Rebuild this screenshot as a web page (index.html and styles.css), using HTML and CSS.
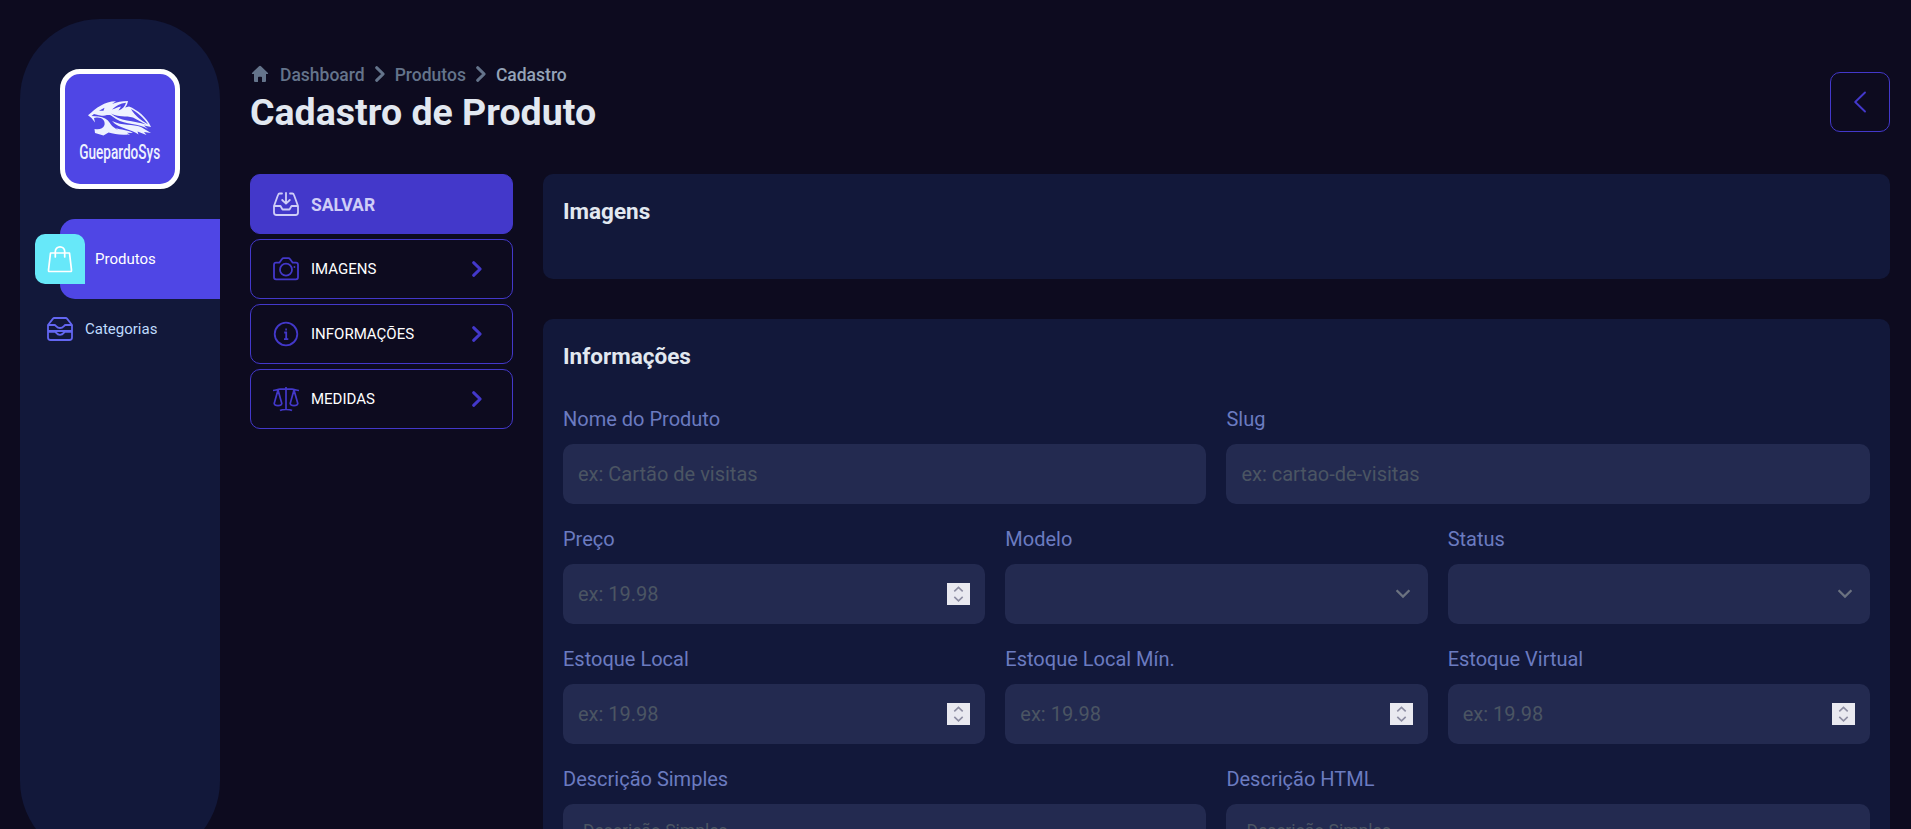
FILE: index.html
```html
<!DOCTYPE html>
<html lang="pt-BR">
<head>
<meta charset="utf-8">
<title>Cadastro de Produto</title>
<link rel="stylesheet" href="styles.css">
</head>
<body>
<svg class="defs" width="0" height="0">
  <symbol id="chev" viewBox="0 0 16 16"><path d="M5 2.4 10.8 8 5 13.6" fill="none" stroke="currentColor" stroke-width="2.7" stroke-linecap="round" stroke-linejoin="round"/></symbol>
  <symbol id="spin" viewBox="0 0 23 22"><path fill="#e9e9f0" d="M0 0h23v22H0z"/><path d="M7.300 8.400 11.500 4.400l4.200 4M7.300 13.800l4.200 4 4.200-4" fill="none" stroke="#8e8ea3" stroke-width="1.600"/></symbol>
  <symbol id="down" viewBox="0 0 14 10"><path d="m.6 1.200 6.400 6.400 6.400-6.400" fill="none" stroke="#6b7280" stroke-width="2.200"/></symbol>
</svg>
<div class="app">
  <aside class="sidebar">
    <div class="logo">
      <svg width="64" height="35" viewBox="0 0 64 35">
        <g fill="#eef2ff">
          <path d="M0 14.300C4 11 8 7 13 4.500 17 1.800 22 .2 28 .2L24 3C29 1 34 .2 40 0c-.5 3-1.500 5-3 6.500L41 5.500c8 3 18 11 22 20.500l-7-1.500 4 3.500c-10-6-22-4-32-10-2.500-1.500-4-3.500-6-4-4-.5-7 1.500-11 .3L6 13l-2.500 2 7 .5c5 .5 9 2.500 11 6 3 5 8 8 15 9.500l3 2.500c-7 1-14-1-19-2l-5 3-8.500-2.500-.5-4C11 29 15 28 16.500 24c1-4.500-2.500-8-8-7.500L6 17l1 4.500L3.500 17z"/>
          <path d="M24 20c10 5 21 3 29 6l10 6-7-1 2.500 3-9-3.500 1 3C44 28 31 28 24 20z"/>
          <path d="M28 27c5 2 11 1.500 17 5l-6-.3 3 2c-6-.5-11-2-14-6.700z"/>
        </g>
        <g fill="#4f46e5">
          <path d="M24 8.500C28 4.500 32 2.500 38 1.700 37 5.500 34.500 8 30.500 9.500L33 5.500c-3 .5-5.500 2-9 3z"/>
          <path d="M43 8c6 3 13 9 17 15.500C53 19 47 15 43 8zM23 12.500c7 4 15 2 22 4l13 7c-12-4-27-3-35-11zM11 9.800l5.500-3-1 3z"/>
        </g>
      </svg>
      <span class="logo-name">GuepardoSys</span>
    </div>
    <nav class="nav">
      <a class="nav-item active">
        <span class="nav-badge"><svg width="26" height="28" viewBox="0 0 26 28" fill="none" stroke="#fff" stroke-width="1.700" stroke-linejoin="round" stroke-linecap="round"><path d="M3.500 8h19l2 17.200a1 1 0 0 1-1 1.300h-21a1 1 0 0 1-1-1.300zM8.300 12V6.500a4.700 4.700 0 0 1 9.400 0V12"/></svg></span>
        <span>Produtos</span>
      </a>
      <a class="nav-item">
        <svg width="26" height="24" viewBox="0 0 26 24" fill="none" stroke="#6366f1" stroke-width="1.800" stroke-linejoin="round"><path d="M1 8v6h24V8l-5-6.400q-.5-.6-1.200-.6H7.200q-.7 0-1.200.6zM1 8h6.500c1.500 0 2 3 5.500 3s4-3 5.500-3H25M1 14v6.500Q1 23 3.500 23h19q2.500 0 2.500-2.500V14M1 14.800h7c1 0 1.500 3 5 3s4-3 5-3h7"/></svg>
        <span>Categorias</span>
      </a>
    </nav>
  </aside>
  <main class="main">
    <header class="header">
      <div>
        <div class="crumbs">
          <svg class="home" width="18" height="18" viewBox="0 0 18 18"><path fill="currentColor" d="M9 .8q.6 0 1 .4l7 6.700q.4.500-.1 1.100H15v7q0 1-1 1h-3v-4.500q0-.8-.8-.8H7.800q-.8 0-.8.800V17H4q-1 0-1-1V9H1.100q-.5-.6-.1-1.100l7-6.700q.4-.4 1-.4z"/></svg>
          <span>Dashboard</span>
          <svg width="18" height="18"><use href="#chev"/></svg>
          <span>Produtos</span>
          <svg width="18" height="18"><use href="#chev"/></svg>
          <span class="current">Cadastro</span>
        </div>
        <h1>Cadastro de Produto</h1>
      </div>
      <a class="back"><svg width="14" height="22" viewBox="0 0 14 22" fill="none" stroke="#4338ca" stroke-width="1.900" stroke-linecap="round" stroke-linejoin="round"><path d="M12 1.500 2.200 11 12 20.500"/></svg></a>
    </header>
    <div class="columns">
      <div class="menu">
        <a class="btn save">
          <svg width="26" height="24" viewBox="0 0 26 24" fill="none" stroke="currentColor" stroke-width="1.800" stroke-linecap="round" stroke-linejoin="round"><path d="M9 1.500H6.700q-1.200 0-1.600 1.200L1 14v6.500Q1 23 3.500 23h19q2.500 0 2.500-2.500V14L20.900 2.700q-.4-1.200-1.600-1.200H17M1 14h6.500l2 3.500h7l2-3.500H25M13 1v10.500M9.200 8l3.800 3.700L16.800 8"/></svg>
          <span>SALVAR</span>
        </a>
        <a class="btn">
          <svg width="26" height="24" viewBox="0 0 26 24" fill="none" stroke="#4338ca" stroke-width="1.800" stroke-linejoin="round"><path d="M3 5.700h3.300L9 2q.6-.9 1.600-.9h4.800q1 0 1.600.9l2.700 3.700H23q2 0 2 2v12.600q0 2-2 2H3q-2 0-2-2V7.700q0-2 2-2z"/><circle cx="13" cy="12.700" r="6"/><path d="M20.700 10h1.500"/></svg>
          <span>IMAGENS</span><svg class="go" width="18" height="18"><use href="#chev"/></svg>
        </a>
        <a class="btn">
          <svg width="26" height="26" viewBox="0 0 26 26" fill="none" stroke="#4338ca" stroke-width="1.800"><circle cx="13" cy="13" r="11.300"/><path d="M11.200 11.500h2V18M11 18.200h4.300"/><path d="M12.300 8.500h1.600"/></svg>
          <span>INFORMAÇÕES</span><svg class="go" width="18" height="18"><use href="#chev"/></svg>
        </a>
        <a class="btn">
          <svg width="26" height="26" viewBox="0 0 26 26" fill="none" stroke="#4338ca" stroke-width="1.700" stroke-linejoin="round"><path d="M13 1v23M0 4.500c3 0 4.500-1.300 7-1.300h12c2.500 0 4 1.300 7 1.300M7 24.500c1.500-1 3.500-1 6-1s4.500 0 6 1M5 4 1.200 17.500q.3 2.200 3.800 2.200t3.800-2.200zM21 4l-3.800 13.500q.3 2.200 3.800 2.200t3.800-2.200z"/></svg>
          <span>MEDIDAS</span><svg class="go" width="18" height="18"><use href="#chev"/></svg>
        </a>
      </div>
      <div class="panels">
        <section class="panel images"><h2>Imagens</h2></section>
        <section class="panel">
          <h2>Informações</h2>
          <div class="row two">
            <div class="field"><label>Nome do Produto</label><div class="input">ex: Cartão de visitas</div></div>
            <div class="field"><label>Slug</label><div class="input">ex: cartao-de-visitas</div></div>
          </div>
          <div class="row three">
            <div class="field"><label>Preço</label><div class="input">ex: 19.98<svg width="23" height="22"><use href="#spin"/></svg></div></div>
            <div class="field"><label>Modelo</label><div class="input select"><svg width="14" height="10"><use href="#down"/></svg></div></div>
            <div class="field"><label>Status</label><div class="input select"><svg width="14" height="10"><use href="#down"/></svg></div></div>
          </div>
          <div class="row three">
            <div class="field"><label>Estoque Local</label><div class="input">ex: 19.98<svg width="23" height="22"><use href="#spin"/></svg></div></div>
            <div class="field"><label>Estoque Local Mín.</label><div class="input">ex: 19.98<svg width="23" height="22"><use href="#spin"/></svg></div></div>
            <div class="field"><label>Estoque Virtual</label><div class="input">ex: 19.98<svg width="23" height="22"><use href="#spin"/></svg></div></div>
          </div>
          <div class="row two">
            <div class="field"><label>Descrição Simples</label><div class="input area">Descrição Simples</div></div>
            <div class="field"><label>Descrição HTML</label><div class="input area">Descrição Simples</div></div>
          </div>
        </section>
      </div>
    </div>
  </main>
</div>
</body>
</html>
```
FILE: styles.css
```css
* { box-sizing: border-box; }
body { margin: 0; background: #0d0b1f; color: #e2e8f0; font-family: Roboto, "Liberation Sans", sans-serif; font-size: 16px; }
svg { flex: none; display: block; }
.defs { position: absolute; }
.app { height: 829px; overflow: hidden; display: flex; gap: 30px; padding: 19px 21px 0 20px; }

.sidebar { flex: none; width: 200px; height: 842px; padding-top: 50px; border-radius: 80px; background: #12183a; }
.logo { width: 120px; height: 120px; margin: 0 auto; padding-top: 27px; border: 5px solid #fff; border-radius: 20px; background: #4f46e5; display: flex; flex-direction: column; align-items: center; }
.logo-name { margin-top: 6px; font-size: 17px; line-height: 20px; font-weight: 500; color: #eef2ff; transform: scale(.8, 1.2); white-space: nowrap; }
.nav { margin-top: 30px; }
.nav-item { display: flex; align-items: center; gap: 12px; height: 60px; padding-left: 27px; font-size: 15px; color: #bfdbfe; }
.nav-item.active { height: 80px; margin-left: 40px; padding-left: 0; gap: 10px; border-radius: 15px 0 0 15px; background: #4f46e5; color: #fff; }
.nav-badge { display: flex; align-items: center; justify-content: center; width: 50px; height: 50px; margin-left: -25px; border-radius: 10px 10px 0 10px; background: #67e8f9; }

.main { flex: 1; min-width: 0; padding-top: 44px; }
.header { display: flex; justify-content: space-between; align-items: flex-start; height: 111px; }
.crumbs { display: flex; align-items: center; height: 22px; gap: 6px; font-size: 17.5px; line-height: 20px; font-weight: 500; color: #64748b; }
.crumbs span { padding-top: 1px; }
.home { margin-right: 5px; margin-left: 1px; }
.current { color: #94a3b8; }
h1 { margin: 5px 0 0; font-size: 37.5px; line-height: 44px; font-weight: 700; }
.back { display: flex; align-items: center; justify-content: center; width: 60px; height: 60px; margin-top: 9px; border: 1px solid #4338ca; border-radius: 10px; }

.columns { display: flex; gap: 30px; }
.menu { flex: none; width: 263px; display: flex; flex-direction: column; gap: 5px; }
.btn { display: flex; align-items: center; gap: 12px; height: 60px; padding: 0 26px 0 22px; border: 1px solid #4338ca; border-radius: 10px; font-size: 15px; color: #fff; }
.save { background: #4338ca; color: #cfcdf7; font-size: 17.5px; font-weight: 700; }
.save span { padding-top: 2px; }
.go { margin-left: auto; color: #4338ca; }

.panels { flex: 1; min-width: 0; display: flex; flex-direction: column; gap: 40px; }
.panel { padding: 20px 20px 0; border-radius: 10px; background: #12183a; }
.images { height: 105px; }
h2 { margin: 0; font-size: 22.5px; line-height: 35px; font-weight: 700; }
.row { display: grid; column-gap: 20px; height: 120px; }
h2 + .row { margin-top: 10px; }
.two { grid-template-columns: 643.4px 1fr; }
.three { grid-template-columns: 1fr 1fr 1fr; }
.field { padding-top: 20px; }
label { display: block; height: 40px; font-size: 20px; line-height: 30px; color: #6b7bc0; }
.input { display: flex; align-items: center; justify-content: space-between; height: 60px; padding: 0 15px; border-radius: 10px; background: #232a50; font-size: 20px; color: #4b5563; }
.select { justify-content: flex-end; padding-right: 18px; }
.area { height: 150px; align-items: flex-start; padding: 17px 20px; font-size: 17.5px; }
```
